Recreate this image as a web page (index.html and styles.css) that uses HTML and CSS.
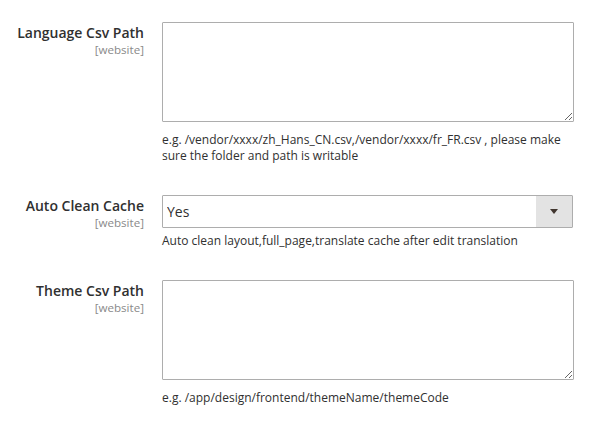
FILE: index.html
```html
<!DOCTYPE html>
<html lang="en">
<head>
<meta charset="utf-8">
<title>Config</title>
<link rel="stylesheet" href="styles.css">
</head>
<body>
<form class="config">
  <div class="row">
    <div class="label">
      <label for="lang-csv">Language Csv Path</label>
      <span class="scope">[website]</span>
    </div>
    <div class="field">
      <textarea id="lang-csv" class="textarea"></textarea>
      <p class="note note-textarea">e.g. /vendor/xxxx/zh_Hans_CN.csv,/vendor/xxxx/fr_FR.csv , please make sure the folder and path is writable</p>
    </div>
  </div>
  <div class="row">
    <div class="label">
      <label for="auto-clean">Auto Clean Cache</label>
      <span class="scope">[website]</span>
    </div>
    <div class="field">
      <div class="select-wrap">
        <select id="auto-clean" class="select">
          <option>Yes</option>
          <option>No</option>
        </select>
        <span class="select-arrow"></span>
      </div>
      <p class="note note-select">Auto clean layout,full_page,translate cache after edit translation</p>
    </div>
  </div>
  <div class="row">
    <div class="label">
      <label for="theme-csv">Theme Csv Path</label>
      <span class="scope">[website]</span>
    </div>
    <div class="field">
      <textarea id="theme-csv" class="textarea"></textarea>
      <p class="note note-textarea">e.g. /app/design/frontend/themeName/themeCode</p>
    </div>
  </div>
</form>
</body>
</html>
```

FILE: styles.css
```css
html, body {
  margin: 0;
  padding: 0;
  background: #ffffff;
}

body {
  font-family: "Open Sans", "Liberation Sans", sans-serif;
  color: #303030;
}

.config {
  display: flex;
  flex-direction: column;
  gap: 31px;
  padding-top: 22px;
}

.row {
  display: grid;
  grid-template-columns: 144px 412px;
  column-gap: 18px;
  align-items: start;
}

.label {
  display: flex;
  flex-direction: column;
  align-items: flex-end;
  text-align: right;
  padding-top: 1px;
}

.label label {
  font-size: 14px;
  font-weight: 600;
  line-height: 19px;
  color: #303030;
}

.scope {
  font-size: 11.6px;
  line-height: 15px;
  color: #8a8a8a;
}

.field {
  display: flex;
  flex-direction: column;
}

.textarea {
  display: block;
  box-sizing: border-box;
  width: 412px;
  height: 100px;
  margin: 0;
  border: 1px solid #adadad;
  border-radius: 1px;
  background: #ffffff;
  font-family: inherit;
  font-size: 14px;
  padding: 6px 10px;
  resize: both;
}

.select-wrap {
  position: relative;
  width: 411px;
  height: 33px;
}

.select {
  appearance: none;
  -webkit-appearance: none;
  box-sizing: border-box;
  width: 100%;
  height: 33px;
  margin: 0;
  border: 1px solid #adadad;
  border-radius: 1px;
  background: #ffffff;
  font-family: "Open Sans", "Liberation Sans", sans-serif;
  font-size: 14px;
  color: #303030;
  padding: 0 40px 0 4px;
}

.select-arrow {
  position: absolute;
  top: 1px;
  right: 1px;
  bottom: 1px;
  width: 36px;
  background: #e3e3e3;
  pointer-events: none;
}

.select-arrow::after {
  content: "";
  position: absolute;
  left: 14px;
  top: 13px;
  border-left: 4px solid transparent;
  border-right: 4px solid transparent;
  border-top: 5px solid #41362f;
}

.note {
  margin: 0;
  font-size: 12px;
  line-height: 16px;
  color: #303030;
}

.note-textarea {
  margin-top: 10px;
}

.note-select {
  margin-top: 5px;
}
```
